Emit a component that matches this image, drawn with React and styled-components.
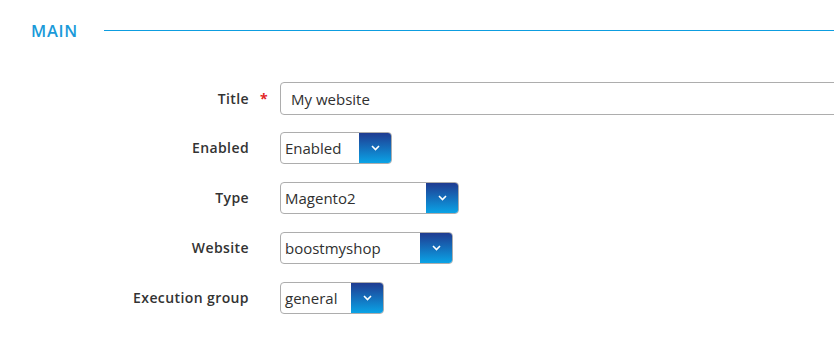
import React from 'react';
import styled, { createGlobalStyle } from 'styled-components';

const GlobalStyle = createGlobalStyle`
  html, body {
    margin: 0;
    padding: 0;
    background: #fff;
    font-family: "Open Sans", "Liberation Sans", sans-serif;
    color: #333;
  }
`;

const Page = styled.div`
  width: 834px;
  height: 349px;
  overflow: hidden;
`;

const SectionHeader = styled.div`
  display: flex;
  align-items: center;
  height: 30px;
  margin-top: 15px;
  padding-left: 31px;
`;

const SectionTitle = styled.h2`
  margin: 0;
  font-size: 16.5px;
  font-weight: 600;
  color: #1a9ad9;
  letter-spacing: 0.7px;
`;

const SectionLine = styled.div`
  flex: 1;
  height: 1px;
  margin-left: 26px;
  background: #0d9de0;
`;

const Form = styled.div`
  display: flex;
  flex-direction: column;
  gap: 17px;
  padding-top: 37px;
`;

const Row = styled.div`
  display: flex;
  align-items: flex-start;
  height: 33px;
`;

const Label = styled.label`
  width: 249px;
  flex-shrink: 0;
  text-align: right;
  line-height: ${p => p.$h}px;
  font-size: 14px;
  font-weight: 600;
  letter-spacing: 0.4px;
  color: #333;
`;

const Required = styled.span`
  width: 31px;
  flex-shrink: 0;
  padding-left: 11px;
  box-sizing: border-box;
  line-height: 33px;
  color: #e22626;
  font-size: 14px;
  font-weight: 700;
`;

const TextInput = styled.input`
  flex: 1;
  height: 33px;
  box-sizing: border-box;
  margin-right: -10px;
  border: 1px solid #adadad;
  border-radius: 4px;
  padding: 0 10px;
  font: inherit;
  font-size: 15px;
  color: #303030;
  outline: none;
`;

const Select = styled.div`
  display: flex;
  width: ${p => p.$width}px;
  height: 32px;
  box-sizing: border-box;
  border: 1px solid #adadad;
  border-radius: 4px;
  overflow: hidden;
`;

const SelectValue = styled.div`
  flex: 1;
  display: flex;
  align-items: center;
  padding-left: 4px;
  font-size: 15px;
  color: #303030;
`;

const SelectButton = styled.div`
  width: 32px;
  display: flex;
  align-items: center;
  justify-content: center;
  background: linear-gradient(to bottom, #1f3b91, #0aa3e6);
`;

const Chevron = () => (
  <svg width="9" height="6" viewBox="0 0 9 6">
    <path d="M1 1l3.5 3.5L8 1" stroke="#fff" strokeWidth="1.6" fill="none" />
  </svg>
);

const fields = [
  { label: 'Enabled', value: 'Enabled', width: 112 },
  { label: 'Type', value: 'Magento2', width: 179 },
  { label: 'Website', value: 'boostmyshop', width: 173 },
  { label: 'Execution group', value: 'general', width: 104 },
];

export default function App() {
  return (
    <Page>
      <GlobalStyle />
      <SectionHeader>
        <SectionTitle>MAIN</SectionTitle>
        <SectionLine />
      </SectionHeader>
      <Form>
        <Row>
          <Label $h={33}>Title</Label>
          <Required>*</Required>
          <TextInput defaultValue="My website" />
        </Row>
        {fields.map(f => (
          <Row key={f.label}>
            <Label $h={32}>{f.label}</Label>
            <Required />
            <Select $width={f.width}>
              <SelectValue>{f.value}</SelectValue>
              <SelectButton>
                <Chevron />
              </SelectButton>
            </Select>
          </Row>
        ))}
      </Form>
    </Page>
  );
}
